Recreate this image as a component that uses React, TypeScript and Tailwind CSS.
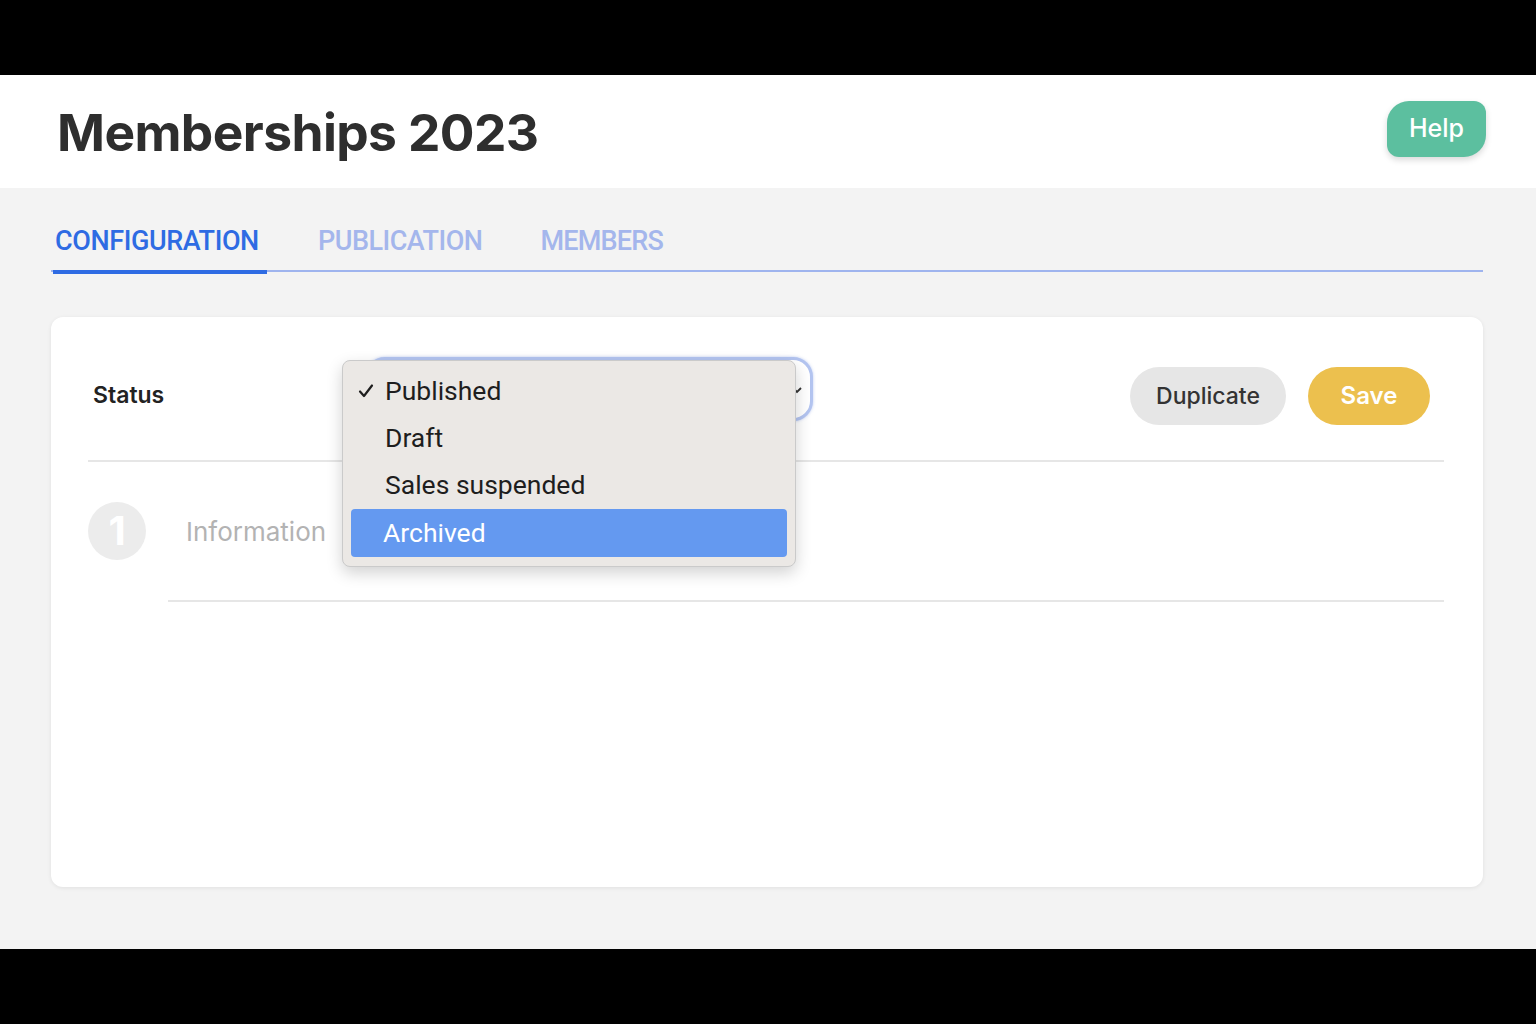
import React from "react";

export default function App() {
  return (
    <div className="flex h-[1024px] w-[1536px] flex-col overflow-hidden bg-black" style={{ fontFamily: "Inter, 'Liberation Sans', sans-serif" }}>
      <div className="h-[75px] shrink-0 bg-black" />
      <header className="flex h-[113px] shrink-0 items-center justify-between bg-white pl-[57px] pr-[50px]">
        <h1 className="mt-[2px] text-[51.5px] font-bold tracking-[-0.6px] text-[#2e2e2e]">Memberships 2023</h1>
        <button className="-mt-[6px] flex h-[56px] w-[99px] items-center justify-center rounded-tl-[22px] rounded-tr-[12px] rounded-bl-[12px] rounded-br-[22px] bg-[#5cbf9f] text-[25px] font-medium text-white shadow-[0_3px_6px_rgba(0,0,0,0.15)]">
          Help
        </button>
      </header>
      <main className="flex h-[761px] shrink-0 flex-col bg-[#f3f3f3] pl-[51px] pr-[53px]">
        <nav className="mt-[36px] flex h-[48px] items-start border-b-2 border-[#9fb4ee] pl-[2px]" style={{ fontFamily: "Roboto, 'Liberation Sans', sans-serif" }}>
          <div className="relative h-[48px] w-[214px] pl-[2px]">
            <span className="block text-[27px] font-medium leading-[34px] tracking-[-0.4px] text-[#2e6be3]">CONFIGURATION</span>
            <div className="absolute -bottom-[2px] left-0 h-[4px] w-[214px] bg-[#2e6be3]" />
          </div>
          <span className="ml-[51px] block text-[27px] font-medium leading-[34px] tracking-[-0.5px] text-[#a4b6ec]">PUBLICATION</span>
          <span className="ml-[58px] block text-[27px] font-medium leading-[34px] tracking-[-0.8px] text-[#a4b6ec]">MEMBERS</span>
        </nav>
        <section className="mt-[45px] flex h-[570px] flex-col rounded-[12px] bg-white pl-[37px] pr-[39px] shadow-[0_1px_4px_rgba(0,0,0,0.08)]">
          <div className="flex h-[145px] shrink-0 items-center border-b-2 border-[#e6e6e6] pt-[12px]">
            <span className="ml-[5px] mt-[2px] w-[272px] text-[23px] font-semibold text-[#222]">Status</span>
            <div className="relative -mt-[12px]">
              <div className="relative h-[64px] w-[448px] rounded-[20px] border-[3px] border-[#b3c4f0] bg-white shadow-[0_0_3px_rgba(120,150,230,0.5)]">
                <svg className="absolute right-[8px] top-[26px]" width="10" height="8" viewBox="0 0 10 8">
                  <path d="M1 2 L5 6 L9 2" fill="none" stroke="#333" strokeWidth="1.8" />
                </svg>
              </div>
              <div className="absolute left-[-23px] top-[3px] z-10 flex h-[207px] w-[454px] flex-col rounded-[8px] border border-[#cacaca] bg-[#ebe8e5] px-[8px] pt-[7px] shadow-[0_6px_16px_rgba(0,0,0,0.18)]" style={{ fontFamily: "Roboto, 'Liberation Sans', sans-serif" }}>
                <div className="flex h-[47px] items-center text-[26.5px] text-[#1e1e1e]">
                  <span className="flex w-[34px] items-center pl-[7px]">
                    <svg width="16" height="16" viewBox="0 0 16 16">
                      <path d="M2 8.5 L6 13 L14 2.5" fill="none" stroke="#1e1e1e" strokeWidth="2.2" strokeLinecap="round" strokeLinejoin="round" />
                    </svg>
                  </span>
                  <span>Published</span>
                </div>
                <div className="flex h-[47px] items-center pl-[34px] text-[26.5px] text-[#1e1e1e]">Draft</div>
                <div className="flex h-[47px] items-center pl-[34px] text-[26.5px] text-[#1e1e1e]">Sales suspended</div>
                <div className="flex h-[48px] items-center rounded-[4px] bg-[#6499f0] pl-[32px] text-[26.5px] text-white">Archived</div>
              </div>
            </div>
            <div className="ml-auto mt-[3px] flex items-center gap-[22px] pr-[14px]">
              <button className="h-[58px] w-[156px] rounded-full bg-[#e6e6e6] text-[23px] font-medium text-[#333]">Duplicate</button>
              <button className="h-[58px] w-[122px] rounded-full bg-[#ecc04e] text-[24px] font-semibold text-white">Save</button>
            </div>
          </div>
          <div className="flex items-center pt-[40px]">
            <div className="flex h-[58px] w-[58px] items-center justify-center rounded-full bg-[#ececec] text-[40px] font-bold text-white">1</div>
            <span className="ml-[40px] text-[26px] text-[#b3b3b3]">Information</span>
          </div>
          <div className="ml-[80px] mt-[40px] h-[2px] bg-[#e6e6e6]" />
        </section>
      </main>
      <div className="flex-1 bg-black" />
    </div>
  );
}
